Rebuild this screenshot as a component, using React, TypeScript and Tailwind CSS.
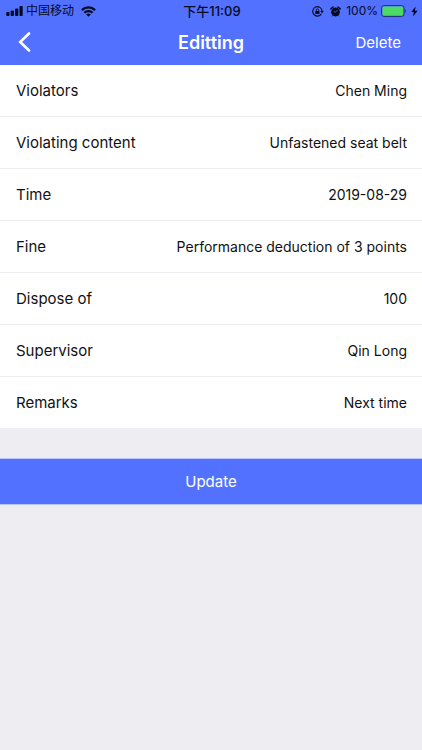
import { useState } from "react";

const initialForm = [
  { id: "violators", label: "Violators", value: "Chen Ming" },
  { id: "content", label: "Violating content", value: "Unfastened seat belt" },
  { id: "time", label: "Time", value: "2019-08-29" },
  { id: "fine", label: "Fine", value: "Performance deduction of 3 points" },
  { id: "dispose", label: "Dispose of", value: "100" },
  { id: "supervisor", label: "Supervisor", value: "Qin Long" },
  { id: "remarks", label: "Remarks", value: "Next time" },
];

function StatusBar() {
  return (
    <div className="grid h-[22px] grid-cols-[1fr_auto_1fr] items-center pl-[6px] pr-[4px] text-[12px] leading-[22px] text-[#060a20]">
      <div className="flex items-center">
        <svg width="17" height="10" viewBox="0 0 17 10" fill="currentColor">
          <rect x="0.3" y="6" width="3.2" height="4" rx="0.8" />
          <rect x="4.7" y="4.4" width="3.2" height="5.6" rx="0.8" />
          <rect x="9.1" y="2.4" width="3.2" height="7.6" rx="0.8" />
          <rect x="13.5" y="0" width="3.2" height="10" rx="0.8" />
        </svg>
        <span className="ml-[3px]">中国移动</span>
        <svg className="ml-[7px]" width="15" height="11" viewBox="0 0 15 11" fill="none" stroke="currentColor" strokeWidth="2.2">
          <path d="M0.9 4.1a9.4 9.4 0 0 1 13.2 0" />
          <path d="M3.4 6.8a5.8 5.8 0 0 1 8.2 0" />
          <path d="M7.5 10.8 5.2 8.5a3.3 3.3 0 0 1 4.6 0z" fill="currentColor" stroke="none" />
        </svg>
      </div>

      <span className="text-[13px] font-medium">下午11:09</span>

      <div className="flex items-center justify-end">
        <svg width="12" height="11" viewBox="0 0 12 11" fill="none" stroke="currentColor">
          <path d="M9.4 7.9A4.7 4.7 0 1 1 10.1 5" strokeWidth="1.1" />
          <path d="M8.2 4.9h3.6L10 7.2z" fill="currentColor" stroke="none" />
          <rect x="3.3" y="4.9" width="4.2" height="3.2" rx="0.4" fill="currentColor" stroke="none" />
          <path d="M4.2 5.2V4a1.2 1.2 0 0 1 2.4 0v1.2" strokeWidth="0.9" />
        </svg>
        <svg className="ml-[6px]" width="11" height="11" viewBox="0 0 11 11">
          <circle cx="5.5" cy="6" r="4.4" fill="currentColor" />
          <path d="M0.9 2.9 3 1M10.1 2.9 8 1" stroke="currentColor" strokeWidth="1.5" strokeLinecap="round" />
          <path d="M2.6 9.4 2 10.3M8.4 9.4l.6.9" stroke="currentColor" strokeWidth="1" />
          <path d="M7.2 4.1 5.5 6.3 3.8 5.4" fill="none" stroke="#5271ff" strokeWidth="0.7" />
        </svg>
        <span className="ml-[5px]">100%</span>
        <svg className="ml-[3px]" width="26" height="12" viewBox="0 0 26 12">
          <rect x="0.5" y="0.5" width="22.6" height="11" rx="2.6" fill="none" stroke="#25357d" />
          <rect x="1.5" y="1.5" width="20.6" height="9" rx="1.6" fill="#4cd964" />
          <path d="M24.2 4.2c1.2.4 1.2 3.2 0 3.6z" fill="#25357d" />
        </svg>
        <svg className="ml-[4px]" width="7" height="11" viewBox="0 0 7 11" fill="currentColor">
          <path d="M4.6 0.4 0.3 6h2.5L1.9 10.6 6.7 4.7H3.9z" />
        </svg>
      </div>
    </div>
  );
}

export default function App() {
  const [form, setForm] = useState(initialForm);

  const handleChange = (id: string, value: string) => {
    setForm(form.map((f) => (f.id === id ? { ...f, value } : f)));
  };

  return (
    <div className="min-h-screen bg-[#eeedf2] font-['Inter','Noto_Sans_CJK_SC',sans-serif]">
      <header className="bg-[#5271ff]">
        <StatusBar />
        <nav className="grid h-[43px] grid-cols-[1fr_auto_1fr] items-center pb-[2px] text-white">
          <button type="button" aria-label="Back" className="ml-[18px] justify-self-start pb-[2px]">
            <svg width="13" height="20" viewBox="0 0 13 20" fill="none" stroke="currentColor" strokeWidth="2.6" strokeLinecap="round" strokeLinejoin="miter">
              <path d="M11 1.5 2.2 10l8.8 8.5" />
            </svg>
          </button>
          <h1 className="text-[18px] font-semibold">Editting</h1>
          <button type="button" className="mr-[21px] justify-self-end pt-[2px] text-[15px]">
            Delete
          </button>
        </nav>
      </header>

      <form onSubmit={(e) => e.preventDefault()}>
        <div className="bg-white">
          {form.map((field) => (
            <div
              key={field.id}
              className="flex h-[52px] items-center border-b border-[#eeedf2] pl-4 pr-[15px] text-[15px] text-[#111111]"
            >
              <label htmlFor={field.id} className="shrink-0 pt-[2px]">
                {field.label}
              </label>
              <input
                id={field.id}
                type="text"
                value={field.value}
                onChange={(e) => handleChange(field.id, e.target.value)}
                className="min-w-0 flex-1 text-right text-[14px] outline-none"
              />
            </div>
          ))}
        </div>

        <button
          type="submit"
          className="mt-[29px] h-[47px] w-full border-y border-[#b9c4fa] bg-[#5271ff] pt-[2px] text-[15px] text-white"
        >
          Update
        </button>
      </form>
    </div>
  );
}
